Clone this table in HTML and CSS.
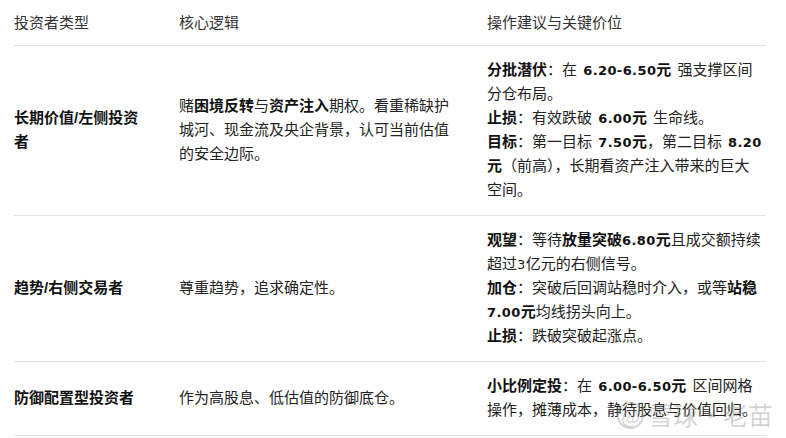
FILE: index.html
```html
<!DOCTYPE html>
<html lang="zh-CN">
<head>
<meta charset="utf-8">
<link rel="stylesheet" href="styles.css">
</head>
<body>
<div class="wrap">
<table class="grid">
  <colgroup>
    <col class="c1">
    <col class="c2">
    <col class="c3">
  </colgroup>
  <thead>
    <tr>
      <th>投资者类型</th>
      <th>核心逻辑</th>
      <th>操作建议与关键价位</th>
    </tr>
  </thead>
  <tbody>
    <tr>
      <td class="type">长期价值/左侧投资者</td>
      <td>赌<b>困境反转</b>与<b>资产注入</b>期权。看重稀缺护城河、现金流及央企背景，认可当前估值的安全边际。</td>
      <td class="ops"><b>分批潜伏</b>：在 <b><span class="num">6.20-6.50</span>元</b> 强支撑区间分仓布局。<br><b>止损</b>：有效跌破 <b><span class="num">6.00</span>元</b> 生命线。<br><b>目标</b>：第一目标 <b><span class="num">7.50</span>元</b>，第二目标 <b><span class="num">8.20</span>元</b>（前高），长期看资产注入带来的巨大空间。</td>
    </tr>
    <tr>
      <td class="type">趋势/右侧交易者</td>
      <td>尊重趋势，追求确定性。</td>
      <td class="ops"><b>观望</b>：等待<b>放量突破<span class="num">6.80</span>元</b>且成交额持续超过<span class="num">3</span>亿元的右侧信号。<br><b>加仓</b>：突破后回调站稳时介入，或等<b>站稳<span class="num">7.00</span>元</b>均线拐头向上。<br><b>止损</b>：跌破突破起涨点。</td>
    </tr>
    <tr>
      <td class="type">防御配置型投资者</td>
      <td>作为高股息、低估值的防御底仓。</td>
      <td class="ops"><b>小比例定投</b>：在 <b><span class="num">6.00-6.50</span>元</b> 区间网格操作，摊薄成本，静待股息与价值回归。</td>
    </tr>
  </tbody>
</table>
<div class="mark"><span class="at">@</span>雪球·老苗</div>
</div>
</body>
</html>
```
FILE: styles.css
```css
html, body {
  margin: 0;
  padding: 0;
  background: #ffffff;
}
.wrap {
  position: relative;
  width: 786px;
  height: 438px;
  overflow: hidden;
}
.grid {
  margin-left: 14px;
  width: 752px;
  border-collapse: collapse;
  table-layout: fixed;
  font-family: "Liberation Sans", "Noto Sans CJK SC", sans-serif;
  font-size: 15px;
  line-height: 24px;
  color: #222222;
}
.c1 { width: 165px; }
.c2 { width: 308px; }
.c3 { width: 279px; }
.grid th {
  text-align: left;
  font-weight: normal;
  color: #333333;
  padding: 11px 30px 10px 0;
  border-bottom: 1px solid #e4e4e4;
}
.grid td {
  padding: 12px 30px 13px 0;
  vertical-align: middle;
  border-bottom: 1px solid #e4e4e4;
}
.grid th:last-child,
.grid td:last-child {
  padding-right: 3px;
}
.grid b {
  font-weight: bold;
  color: #111111;
}
.ops {
  word-spacing: 2px;
}
.num {
  font-family: "DejaVu Sans", sans-serif;
  font-size: 13px;
  line-height: 10px;
  letter-spacing: 0.4px;
}
.type {
  font-weight: bold;
  color: #111111;
}
.mark {
  position: absolute;
  left: 617px;
  top: 398px;
  font-family: "Noto Sans CJK SC", sans-serif;
  font-size: 25px;
  line-height: 32px;
  color: rgba(140, 140, 140, 0.38);
  white-space: nowrap;
  pointer-events: none;
}
.mark .at {
  display: inline-block;
  width: 27px;
  height: 27px;
  line-height: 24px;
  text-align: center;
  font-size: 20px;
  border: 2px solid rgba(140, 140, 140, 0.38);
  border-radius: 50%;
  box-sizing: border-box;
  margin-right: 4px;
  vertical-align: 1px;
}
```
